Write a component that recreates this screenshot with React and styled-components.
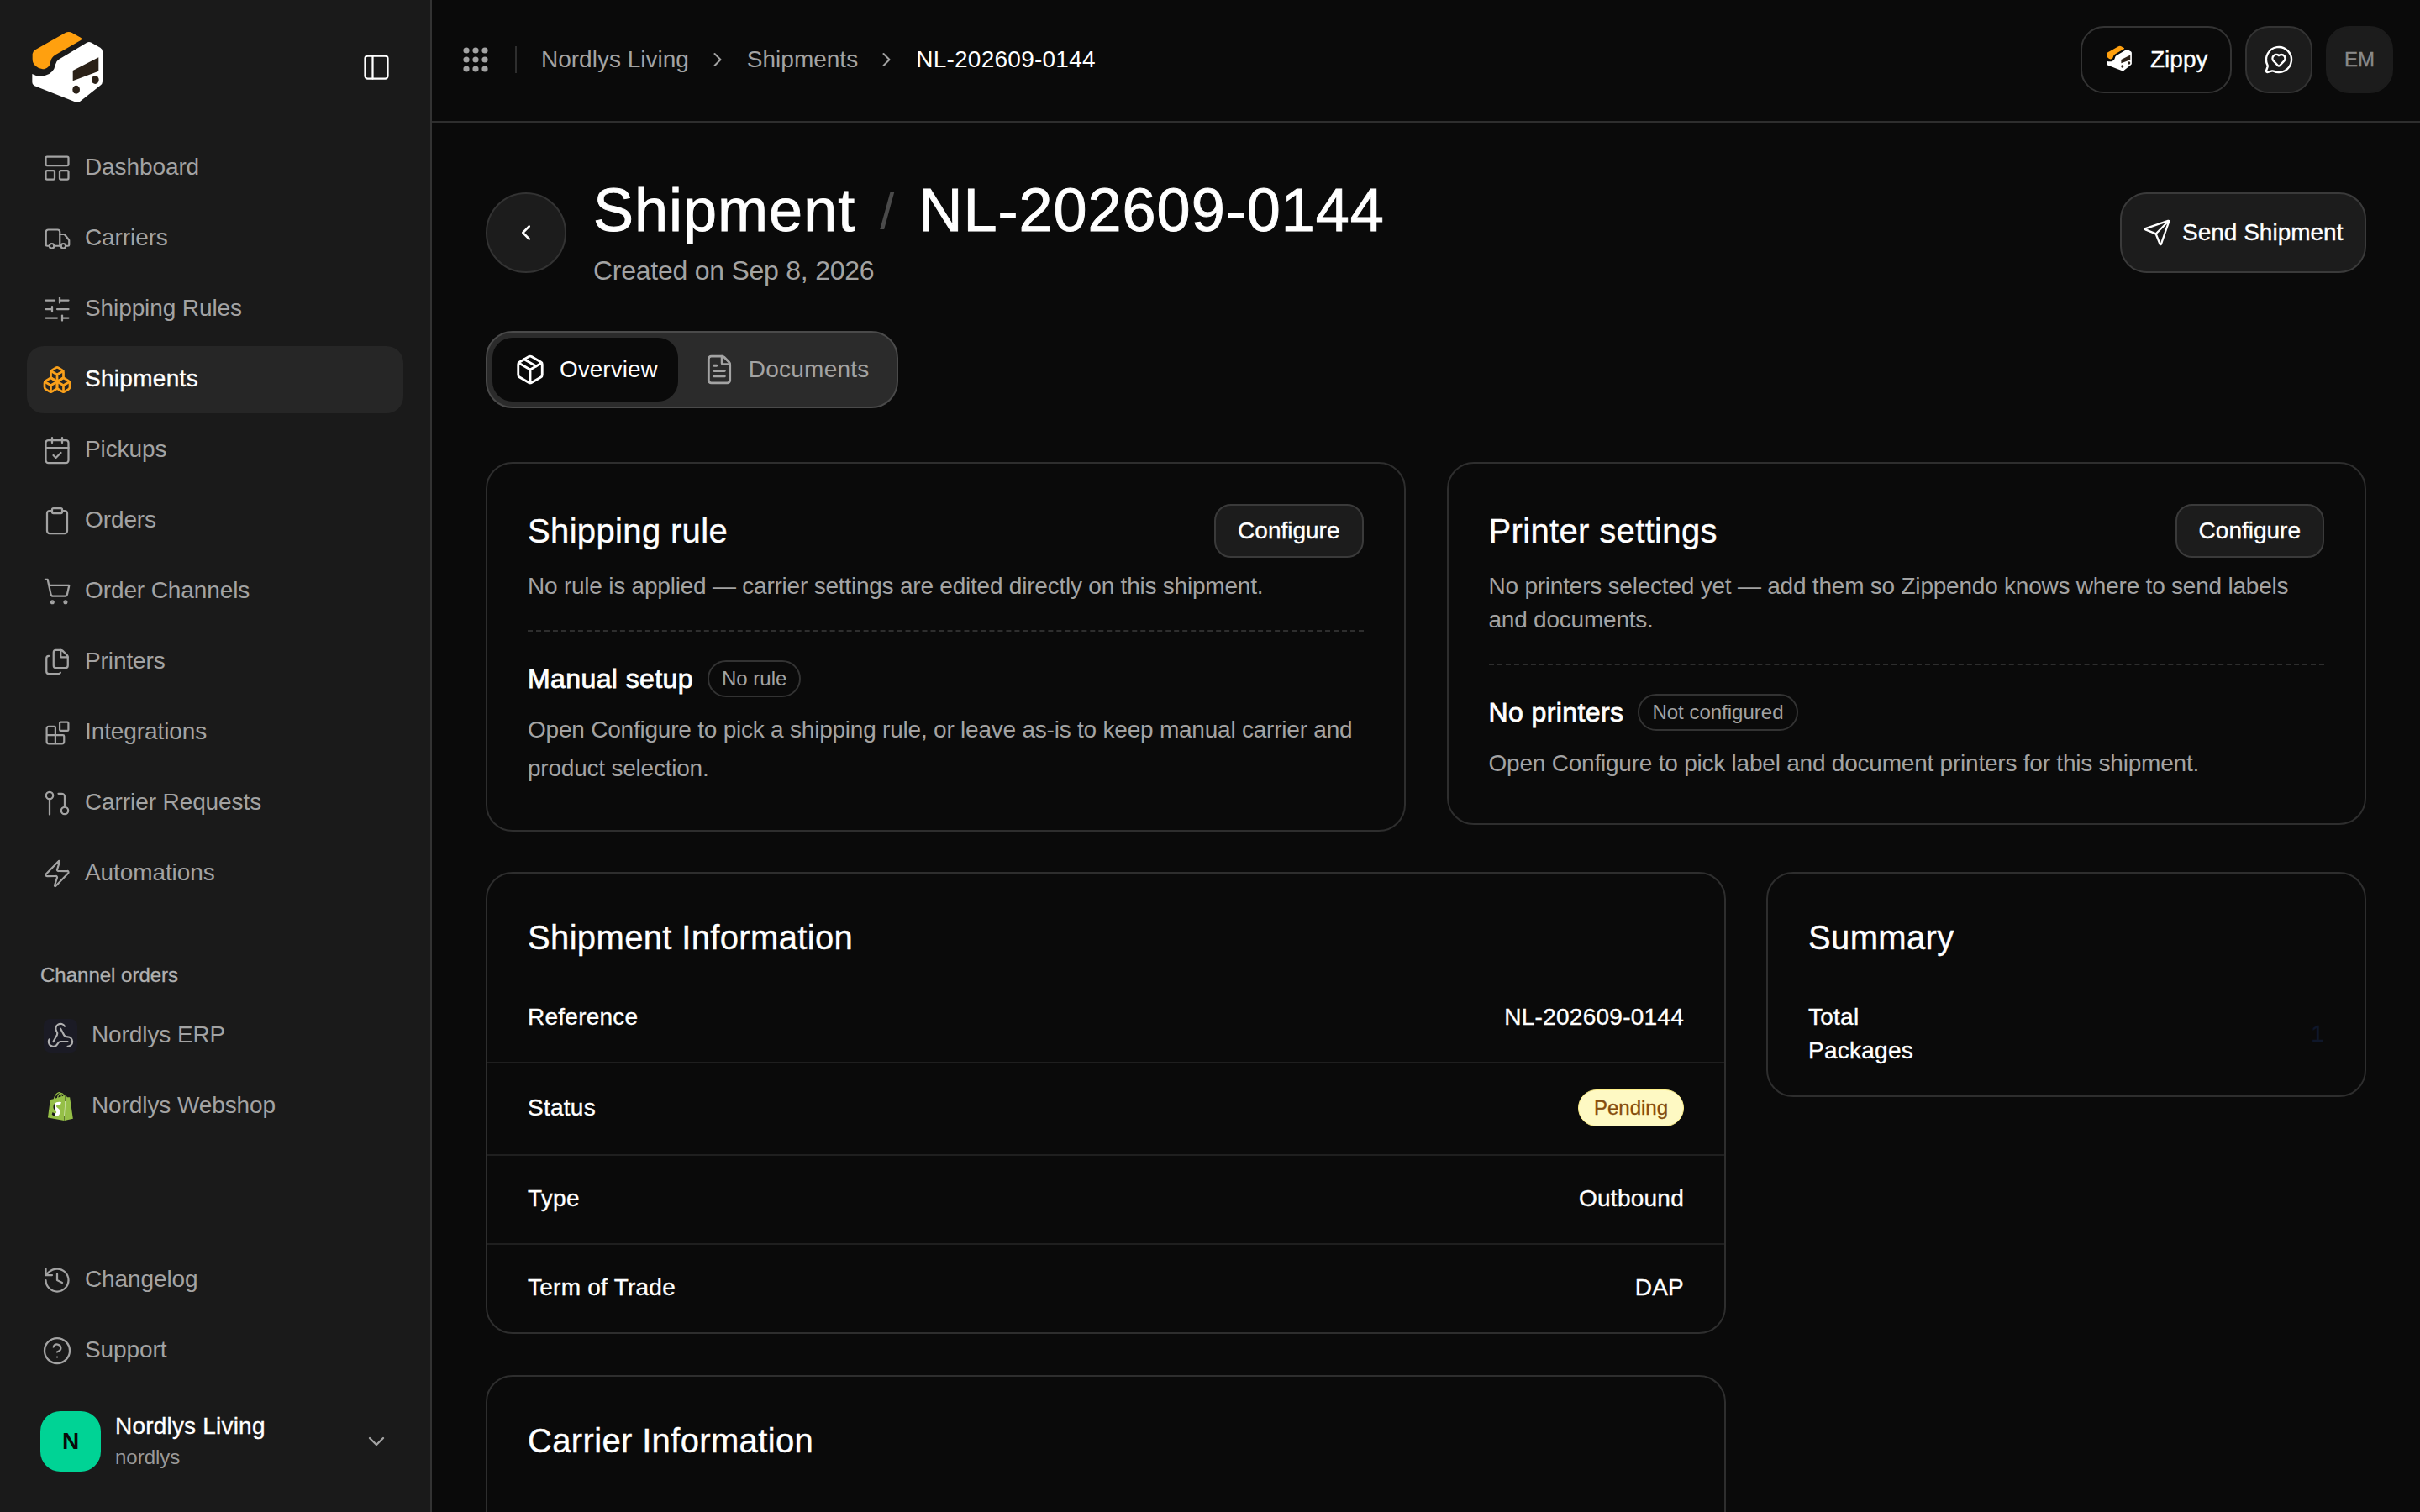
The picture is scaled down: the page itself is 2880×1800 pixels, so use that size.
import React from "react";
import styled, { createGlobalStyle, css } from "styled-components";
import {
  Blocks,
  Boxes,
  CalendarCheck,
  ChevronDown,
  ChevronLeft,
  ChevronRight,
  CircleHelp,
  Clipboard,
  FileText,
  Files,
  History,
  LayoutPanelTop,
  MessageCircleHeart,
  Package,
  PanelLeft,
  Send,
  ShoppingCart,
  SlidersHorizontal,
  Truck,
  Webhook,
  Zap,
} from "lucide-react";
import { SiShopify } from "react-icons/si";

const GlobalStyle = createGlobalStyle`
  html, body {
    margin: 0;
    padding: 0;
    height: 100%;
    background: #0a0a0a;
    overflow: hidden;
  }
  body {
    font-family: "Liberation Sans", Arial, sans-serif;
    font-size: 28px;
    color: #fff;
  }
  * { box-sizing: border-box; }
`;

const medium = css`
  -webkit-text-stroke: 0.35px currentColor;
`;

const Page = styled.div`
  display: flex;
  height: 100vh;
  overflow: hidden;
`;

const Sidebar = styled.aside`
  width: 514px;
  flex-shrink: 0;
  height: 100%;
  display: flex;
  flex-direction: column;
  padding: 36px 32px 48px;
  background: #1a1a1a;
  border-right: 2px solid #333;
`;

const SidebarHead = styled.div`
  display: flex;
  align-items: center;
  justify-content: space-between;
  height: 96px;
  margin-bottom: 28px;
  padding-right: 14px;
  color: #fff;
`;

const PanelToggle = styled(PanelLeft)`
  margin-bottom: 8px;
`;

const NavList = styled.nav`
  display: flex;
  flex-direction: column;
  gap: 4px;
`;

const NavItem = styled.a`
  display: flex;
  align-items: center;
  gap: ${(p) => (p.$wide ? "17px" : "15px")};
  height: 80px;
  padding: 0 0 2px ${(p) => (p.$wide ? "20px" : "18px")};
  border-radius: 20px;
  letter-spacing: ${(p) => (p.$active ? "0.3px" : "-0.1px")};
  color: ${(p) => (p.$active ? "#fff" : "#a3a3a3")};
  background: ${(p) => (p.$active ? "#262626" : "transparent")};
  ${(p) => p.$active && medium}
`;

const NavIcon = styled.span`
  width: 36px;
  height: 36px;
  margin-top: 2px;
  flex-shrink: 0;
  display: flex;
  align-items: center;
  justify-content: center;
`;

const GroupLabel = styled.div`
  margin: 65px 0 16px;
  padding-left: 16px;
  font-size: 24px;
  line-height: 32px;
  color: #b0b0b0;
  ${medium}
`;

const ChannelIcon = styled.span`
  width: 40px;
  height: 40px;
  margin-top: 2px;
  display: flex;
  align-items: center;
  justify-content: center;
  border-radius: 8px;
  background: ${(p) => p.$bg || "transparent"};
  color: #b0b0b0;
  position: relative;
  svg { position: relative; }
`;

const ShopifyFill = styled.span`
  position: absolute;
  left: 13px;
  top: 14px;
  width: 13px;
  height: 18px;
  background: #fff;
`;

const SidebarBottom = styled.div`
  margin-top: auto;
  display: flex;
  flex-direction: column;
  gap: 4px;
`;

const UserRow = styled.div`
  display: flex;
  align-items: center;
  height: 72px;
  margin-top: 28px;
  padding: 0 16px 0 16px;
  color: #a3a3a3;
`;

const Avatar = styled.div`
  width: 72px;
  height: 72px;
  border-radius: 24px;
  background: #00d395;
  color: #0a0a0a;
  display: flex;
  align-items: center;
  justify-content: center;
  font-size: 28px;
  font-weight: 700;
`;

const UserText = styled.div`
  flex: 1;
  margin-left: 17px;
  display: flex;
  flex-direction: column;
`;

const UserName = styled.span`
  color: #fff;
  line-height: 38px;
  letter-spacing: 0.2px;
  ${medium}
`;

const UserSlug = styled.span`
  color: #999;
  font-size: 24px;
  line-height: 36px;
`;

const Main = styled.main`
  flex: 1;
  min-width: 0;
  display: flex;
  flex-direction: column;
  height: 100%;
  overflow: hidden;
`;

const Topbar = styled.header`
  height: 146px;
  flex-shrink: 0;
  display: flex;
  align-items: center;
  padding: 0 32px 2px 37px;
  border-bottom: 2px solid #2e2e2e;
`;

const GridDivider = styled.span`
  width: 2px;
  height: 32px;
  margin: 0 29px 0 32px;
  background: #2e2e2e;
`;

const Crumb = styled.span`
  color: ${(p) => (p.$current ? "#fff" : "#a3a3a3")};
  letter-spacing: ${(p) => (p.$current ? "0.25px" : "0")};
`;

const CrumbChevron = styled(ChevronRight)`
  margin: 0 21px 0 20px;
  color: #a3a3a3;
`;

const TopActions = styled.div`
  margin-left: auto;
  display: flex;
  align-items: center;
  gap: 16px;
`;

const ZippyButton = styled.button`
  height: 80px;
  width: 180px;
  display: flex;
  align-items: center;
  gap: 20px;
  padding: 0 0 0 27px;
  border: 2px solid #333;
  border-radius: 28px;
  background: #0a0a0a;
  color: #fff;
  font: inherit;
  ${medium}
`;

const SquareButton = styled.button`
  width: 80px;
  height: 80px;
  display: flex;
  align-items: center;
  justify-content: center;
  border: 2px solid ${(p) => (p.$plain ? "#1c1c1c" : "#333")};
  border-radius: 28px;
  background: #1c1c1c;
  color: ${(p) => (p.$plain ? "#8a8a8a" : "#fff")};
  font: inherit;
  font-size: 24px;
  ${medium}
`;

const Content = styled.div`
  flex: 1;
  padding: 62px 64px 0;
  display: flex;
  flex-direction: column;
`;

const PageHead = styled.div`
  display: flex;
  align-items: center;
`;

const BackButton = styled.button`
  width: 96px;
  height: 96px;
  flex-shrink: 0;
  display: flex;
  align-items: center;
  justify-content: center;
  border-radius: 50%;
  border: 2px solid #333;
  background: #1c1c1c;
  color: #fff;
`;

const TitleBlock = styled.div`
  margin-left: 32px;
  flex: 1;
`;

const Title = styled.h1`
  margin: 0;
  display: flex;
  align-items: center;
  gap: 29px;
  height: 80px;
  padding-top: 4px;
  font-size: 72px;
  font-weight: 400;
  letter-spacing: 1px;
  -webkit-text-stroke: 0.9px currentColor;
`;

const TitleSlash = styled.span`
  font-size: 62px;
  color: #4a4a4a;
  -webkit-text-stroke: 0;
  letter-spacing: 0;
`;

const Created = styled.p`
  margin: 10px 0 0;
  font-size: 32px;
  line-height: 48px;
  letter-spacing: -0.25px;
  color: #a3a3a3;
`;

const SendButton = styled.button`
  height: 96px;
  width: 293px;
  display: flex;
  align-items: center;
  gap: 13px;
  padding: 0 0 0 25px;
  border: 2px solid #3a3a3a;
  border-radius: 32px;
  background: #1c1c1c;
  color: #fff;
  font: inherit;
  ${medium}
`;

const Tabs = styled.div`
  align-self: flex-start;
  margin-top: 48px;
  height: 92px;
  display: flex;
  align-items: center;
  padding: 0 6px;
  border: 2px solid #4a4a4a;
  border-radius: 32px;
  background: #2b2b2b;
`;

const Tab = styled.div`
  height: 76px;
  display: flex;
  align-items: center;
  gap: 16px;
  padding: 0 ${(p) => (p.$active ? "24px" : "26px")} 0 ${(p) => (p.$active ? "26px" : "30px")};
  border-radius: 24px;
  letter-spacing: ${(p) => (p.$active ? "0" : "0.25px")};
  background: ${(p) => (p.$active ? "#0a0a0a" : "transparent")};
  color: ${(p) => (p.$active ? "#fff" : "#a3a3a3")};
`;

const TwoCards = styled.div`
  display: grid;
  grid-template-columns: 1fr 1fr;
  gap: 49px;
  align-items: start;
  margin-top: 64px;
`;

const Card = styled.section`
  border: 2px solid #2e2e2e;
  border-radius: 32px;
  background: #0a0a0a;
  padding: 48px 48px ${(p) => p.$bottom || "48px"};
`;

const CardHead = styled.div`
  display: flex;
  align-items: center;
  justify-content: space-between;
  height: 64px;
`;

const CardTitle = styled.h2`
  margin: 0;
  font-size: 40px;
  line-height: 56px;
  font-weight: 400;
  letter-spacing: 0.35px;
  ${medium}
`;

const ConfigureButton = styled.button`
  height: 64px;
  padding: 0 26px;
  border: 2px solid #3a3a3a;
  border-radius: 20px;
  background: #1c1c1c;
  color: #fff;
  font: inherit;
  ${medium}
`;

const Muted = styled.p`
  margin: ${(p) => p.$margin || "14px 0 0"};
  line-height: ${(p) => p.$lh || "40px"};
  color: #a3a3a3;
  letter-spacing: -0.22px;
`;

const Dashed = styled.hr`
  margin: 32px 0 34px;
  border: 0;
  border-top: 2px dashed #2e2e2e;
`;

const SetupRow = styled.div`
  display: flex;
  align-items: center;
  gap: 17px;
  height: 44px;
`;

const SetupName = styled.strong`
  font-size: 32px;
  font-weight: 400;
  letter-spacing: 0.4px;
  -webkit-text-stroke: 0.8px currentColor;
`;

const OutlinePill = styled.span`
  height: 44px;
  display: flex;
  align-items: center;
  padding: 0 15px;
  border: 2px solid #333;
  border-radius: 22px;
  font-size: 24px;
  color: #a3a3a3;
`;

const InfoGrid = styled.div`
  display: grid;
  grid-template-columns: 1fr 714px;
  gap: 48px;
  align-items: start;
  margin-top: 48px;
`;

const InfoColumn = styled.div`
  display: flex;
  flex-direction: column;
  gap: 49px;
`;

const InfoCard = styled.section`
  border: 2px solid #2e2e2e;
  border-radius: 32px;
  background: #0a0a0a;
  padding-top: 48px;
  min-height: ${(p) => p.$minHeight || "auto"};
`;

const InfoTitle = styled(CardTitle)`
  padding: 0 48px;
  margin-bottom: 16px;
`;

const InfoRow = styled.div`
  display: flex;
  align-items: center;
  justify-content: space-between;
  padding: 31px 48px 33px;
  line-height: 40px;
  letter-spacing: 0.25px;
  ${medium}
  & + & {
    border-top: 2px solid #1f1f1f;
  }
`;

const SummaryLabel = styled.span`
  width: 140px;
`;

const SummaryValue = styled.span`
  color: #0f172a;
`;

const StatusPill = styled.span`
  height: 44px;
  display: flex;
  align-items: center;
  padding: 0 18px;
  border-radius: 22px;
  background: #fef9c3;
  border: 1px solid #fef08a;
  color: #854d0e;
  font-size: 24px;
  letter-spacing: 0;
  ${medium}
`;

const Logo = ({ size }) => (
  <svg width={size} height={size} viewBox="36 48 288 288">
    <path
      d="M66 118 L172 58 Q185 50 197 57 L228 74 Q236 79 228 84 L138 136 Q122 146 120 162 Q118 180 100 186 Q84 190 68 176 Q56 168 56 150 L56 132 Q56 124 66 118 Z"
      fill="#ffa00f"
    />
    <path
      d="M250 92 Q258 88 266 92 L298 110 Q306 115 306 124 L306 232 Q306 240 298 245 L226 302 Q215 308 204 302 L62 246 Q55 242 55 234 L55 204 Q75 216 100 210 Q132 202 138 170 Q140 158 150 152 Z"
      fill="#fff"
    />
    <path d="M200 192 L292 145 L292 194 L200 229 Z" fill="#2b2118" />
    <ellipse cx="212" cy="260" rx="13" ry="15" fill="#2b2118" />
    <ellipse cx="280" cy="225" rx="13" ry="15" fill="#2b2118" />
  </svg>
);

const GridDots = () => (
  <svg width="30" height="30" viewBox="0 0 30 30" fill="#a3a3a3">
    {[4, 15, 26].map((y) =>
      [4, 15, 26].map((x) => <circle key={`${x}-${y}`} cx={x} cy={y} r="3.6" />)
    )}
  </svg>
);

const RequestIcon = () => (
  <svg
    width="36"
    height="36"
    viewBox="0 0 24 24"
    fill="none"
    stroke="currentColor"
    strokeWidth="1.5"
    strokeLinecap="round"
  >
    <circle cx="6" cy="6" r="2.8" />
    <path d="M6 8.8V21" />
    <circle cx="18" cy="18" r="2.8" />
    <path d="M13 4.5h2.5a2.5 2.5 0 0 1 2.5 2.5v8.2" />
  </svg>
);

const navItems = [
  { label: "Dashboard", icon: <LayoutPanelTop size={36} strokeWidth={1.5} /> },
  { label: "Carriers", icon: <Truck size={33} strokeWidth={1.6} /> },
  { label: "Shipping Rules", icon: <SlidersHorizontal size={36} strokeWidth={1.5} /> },
  { label: "Shipments", icon: <Boxes size={36} strokeWidth={1.8} color="#f9a01b" />, active: true },
  { label: "Pickups", icon: <CalendarCheck size={36} strokeWidth={1.5} /> },
  { label: "Orders", icon: <Clipboard size={36} strokeWidth={1.5} /> },
  { label: "Order Channels", icon: <ShoppingCart size={34} strokeWidth={1.6} /> },
  { label: "Printers", icon: <Files size={34} strokeWidth={1.6} /> },
  { label: "Integrations", icon: <Blocks size={31} strokeWidth={1.7} /> },
  { label: "Carrier Requests", icon: <RequestIcon /> },
  { label: "Automations", icon: <Zap size={36} strokeWidth={1.5} /> },
];

const infoRows = [
  { label: "Reference", value: "NL-202609-0144" },
  { label: "Status", value: <StatusPill>Pending</StatusPill> },
  { label: "Type", value: "Outbound" },
  { label: "Term of Trade", value: "DAP" },
];

export default function App() {
  return (
    <>
      <GlobalStyle />
      <Page>
        <Sidebar>
          <SidebarHead>
            <Logo size={96} />
            <PanelToggle size={36} strokeWidth={1.5} />
          </SidebarHead>
          <NavList>
            {navItems.map((item) => (
              <NavItem key={item.label} $active={item.active}>
                <NavIcon>{item.icon}</NavIcon>
                {item.label}
              </NavItem>
            ))}
          </NavList>
          <GroupLabel>Channel orders</GroupLabel>
          <NavList>
            <NavItem $wide>
              <ChannelIcon $bg="#1b1b25">
                <Webhook size={34} strokeWidth={1.5} />
              </ChannelIcon>
              Nordlys ERP
            </NavItem>
            <NavItem $wide>
              <ChannelIcon>
                <ShopifyFill />
                <SiShopify size={34} color="#95bf47" />
              </ChannelIcon>
              Nordlys Webshop
            </NavItem>
          </NavList>
          <SidebarBottom>
            <NavItem>
              <NavIcon>
                <History size={36} strokeWidth={1.5} />
              </NavIcon>
              Changelog
            </NavItem>
            <NavItem>
              <NavIcon>
                <CircleHelp size={36} strokeWidth={1.5} />
              </NavIcon>
              Support
            </NavItem>
            <UserRow>
              <Avatar>N</Avatar>
              <UserText>
                <UserName>Nordlys Living</UserName>
                <UserSlug>nordlys</UserSlug>
              </UserText>
              <ChevronDown size={32} strokeWidth={1.8} />
            </UserRow>
          </SidebarBottom>
        </Sidebar>

        <Main>
          <Topbar>
            <GridDots />
            <GridDivider />
            <Crumb>Nordlys Living</Crumb>
            <CrumbChevron size={28} strokeWidth={1.8} />
            <Crumb>Shipments</Crumb>
            <CrumbChevron size={28} strokeWidth={1.8} />
            <Crumb $current>NL-202609-0144</Crumb>
            <TopActions>
              <ZippyButton>
                <Logo size={34} />
                Zippy
              </ZippyButton>
              <SquareButton>
                <MessageCircleHeart size={36} strokeWidth={1.6} />
              </SquareButton>
              <SquareButton $plain>EM</SquareButton>
            </TopActions>
          </Topbar>

          <Content>
            <PageHead>
              <BackButton>
                <ChevronLeft size={30} strokeWidth={2} />
              </BackButton>
              <TitleBlock>
                <Title>
                  Shipment
                  <TitleSlash>/</TitleSlash>
                  NL-202609-0144
                </Title>
                <Created>Created on Sep 8, 2026</Created>
              </TitleBlock>
              <SendButton>
                <Send size={34} strokeWidth={1.6} />
                Send Shipment
              </SendButton>
            </PageHead>

            <Tabs>
              <Tab $active>
                <Package size={38} strokeWidth={1.8} />
                Overview
              </Tab>
              <Tab>
                <FileText size={38} strokeWidth={1.8} />
                Documents
              </Tab>
            </Tabs>

            <TwoCards>
              <Card $bottom="50px">
                <CardHead>
                  <CardTitle>Shipping rule</CardTitle>
                  <ConfigureButton>Configure</ConfigureButton>
                </CardHead>
                <Muted>No rule is applied — carrier settings are edited directly on this shipment.</Muted>
                <Dashed />
                <SetupRow>
                  <SetupName>Manual setup</SetupName>
                  <OutlinePill>No rule</OutlinePill>
                </SetupRow>
                <Muted $margin="16px 0 0" $lh="46px">
                  Open Configure to pick a shipping rule, or leave as-is to keep manual carrier and product selection.
                </Muted>
              </Card>
              <Card>
                <CardHead>
                  <CardTitle>Printer settings</CardTitle>
                  <ConfigureButton>Configure</ConfigureButton>
                </CardHead>
                <Muted>No printers selected yet — add them so Zippendo knows where to send labels and documents.</Muted>
                <Dashed />
                <SetupRow>
                  <SetupName>No printers</SetupName>
                  <OutlinePill>Not configured</OutlinePill>
                </SetupRow>
                <Muted $margin="16px 0 0" $lh="46px">
                  Open Configure to pick label and document printers for this shipment.
                </Muted>
              </Card>
            </TwoCards>

            <InfoGrid>
              <InfoColumn>
                <InfoCard>
                  <InfoTitle>Shipment Information</InfoTitle>
                  {infoRows.map((row) => (
                    <InfoRow key={row.label}>
                      <span>{row.label}</span>
                      {row.value}
                    </InfoRow>
                  ))}
                </InfoCard>
                <InfoCard $minHeight="400px">
                  <InfoTitle>Carrier Information</InfoTitle>
                </InfoCard>
              </InfoColumn>
              <InfoCard>
                <InfoTitle>Summary</InfoTitle>
                <InfoRow>
                  <SummaryLabel>Total Packages</SummaryLabel>
                  <SummaryValue>1</SummaryValue>
                </InfoRow>
              </InfoCard>
            </InfoGrid>
          </Content>
        </Main>
      </Page>
    </>
  );
}
